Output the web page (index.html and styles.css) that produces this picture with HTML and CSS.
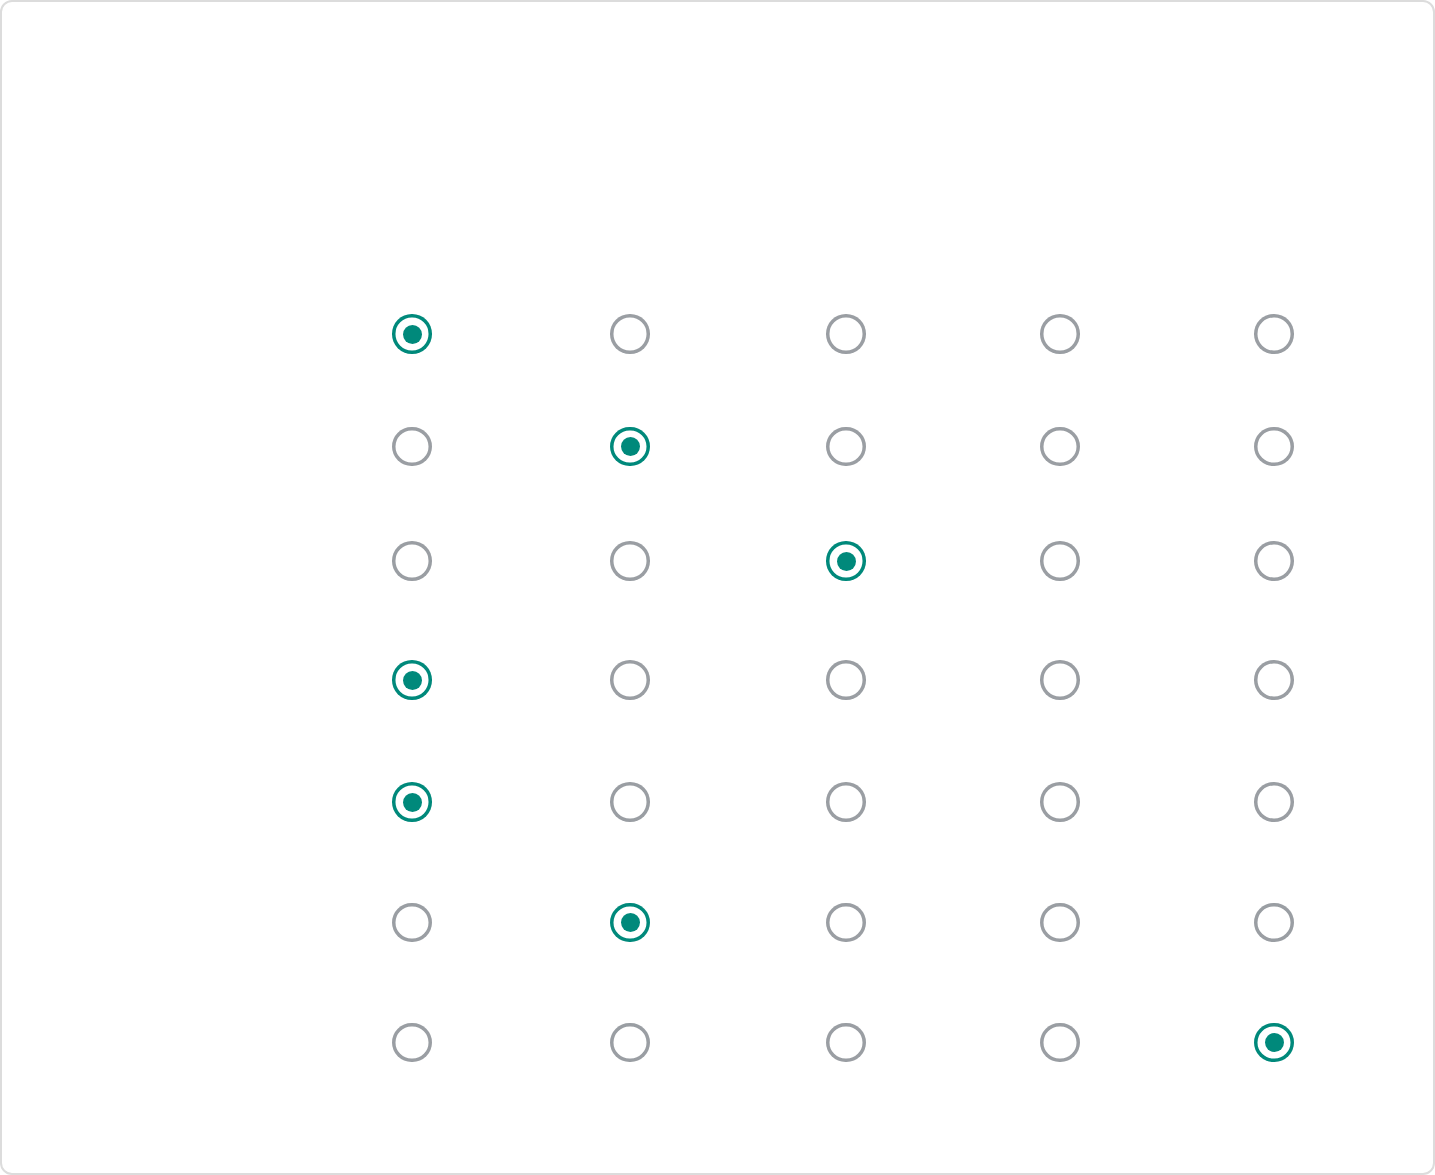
FILE: index.html
```html
<!DOCTYPE html>
<html lang="en">
<head>
<meta charset="utf-8">
<title>Radio grid</title>
<link rel="stylesheet" href="styles.css">
</head>
<body>
<div class="card">
  <div class="grid">
    <div class="head"></div>
    <div class="row r1">
      <span class="label"></span>
      <span class="cell"><span class="radio on"></span></span>
      <span class="cell"><span class="radio"></span></span>
      <span class="cell"><span class="radio"></span></span>
      <span class="cell"><span class="radio"></span></span>
      <span class="cell"><span class="radio"></span></span>
    </div>
    <div class="row r2">
      <span class="label"></span>
      <span class="cell"><span class="radio"></span></span>
      <span class="cell"><span class="radio on"></span></span>
      <span class="cell"><span class="radio"></span></span>
      <span class="cell"><span class="radio"></span></span>
      <span class="cell"><span class="radio"></span></span>
    </div>
    <div class="row r3">
      <span class="label"></span>
      <span class="cell"><span class="radio"></span></span>
      <span class="cell"><span class="radio"></span></span>
      <span class="cell"><span class="radio on"></span></span>
      <span class="cell"><span class="radio"></span></span>
      <span class="cell"><span class="radio"></span></span>
    </div>
    <div class="row r4">
      <span class="label"></span>
      <span class="cell"><span class="radio on"></span></span>
      <span class="cell"><span class="radio"></span></span>
      <span class="cell"><span class="radio"></span></span>
      <span class="cell"><span class="radio"></span></span>
      <span class="cell"><span class="radio"></span></span>
    </div>
    <div class="row r5">
      <span class="label"></span>
      <span class="cell"><span class="radio on"></span></span>
      <span class="cell"><span class="radio"></span></span>
      <span class="cell"><span class="radio"></span></span>
      <span class="cell"><span class="radio"></span></span>
      <span class="cell"><span class="radio"></span></span>
    </div>
    <div class="row r6">
      <span class="label"></span>
      <span class="cell"><span class="radio"></span></span>
      <span class="cell"><span class="radio on"></span></span>
      <span class="cell"><span class="radio"></span></span>
      <span class="cell"><span class="radio"></span></span>
      <span class="cell"><span class="radio"></span></span>
    </div>
    <div class="row r7">
      <span class="label"></span>
      <span class="cell"><span class="radio"></span></span>
      <span class="cell"><span class="radio"></span></span>
      <span class="cell"><span class="radio"></span></span>
      <span class="cell"><span class="radio"></span></span>
      <span class="cell"><span class="radio on"></span></span>
    </div>
  </div>
</div>
</body>
</html>
```
FILE: styles.css
```css
* { box-sizing: border-box; }
html, body { margin: 0; padding: 0; background: #ffffff; }
body { font-family: "Roboto", "Liberation Sans", sans-serif; }
.card {
  width: 1435px;
  height: 1175px;
  border: 2px solid #dcdcdc;
  border-radius: 12px;
  background: #ffffff;
}
.grid { display: flex; flex-direction: column; }
.head { height: 276px; }
.row {
  display: grid;
  grid-template-columns: 301px 218px 218px 214px 214px 214px;
}
.r1 { height: 112px; }
.r2 { height: 113px; }
.r3 { height: 116px; }
.r4 { height: 122px; }
.r5 { height: 122px; }
.r6 { height: 119px; }
.r7 { height: 121px; }
.cell {
  display: flex;
  align-items: center;
  justify-content: center;
}
.radio {
  position: relative;
  width: 39.5px;
  height: 39.5px;
  border-radius: 50%;
  background: #ffffff;
  box-shadow: inset 0 0 0 3.5px #9a9ea3;
}
.radio.on { box-shadow: inset 0 0 0 3.5px #00897b; }
.radio.on::after {
  content: "";
  position: absolute;
  left: 50%;
  top: 50%;
  width: 19px;
  height: 19px;
  margin: -9.5px 0 0 -9.5px;
  border-radius: 50%;
  background: #00897b;
}
```
